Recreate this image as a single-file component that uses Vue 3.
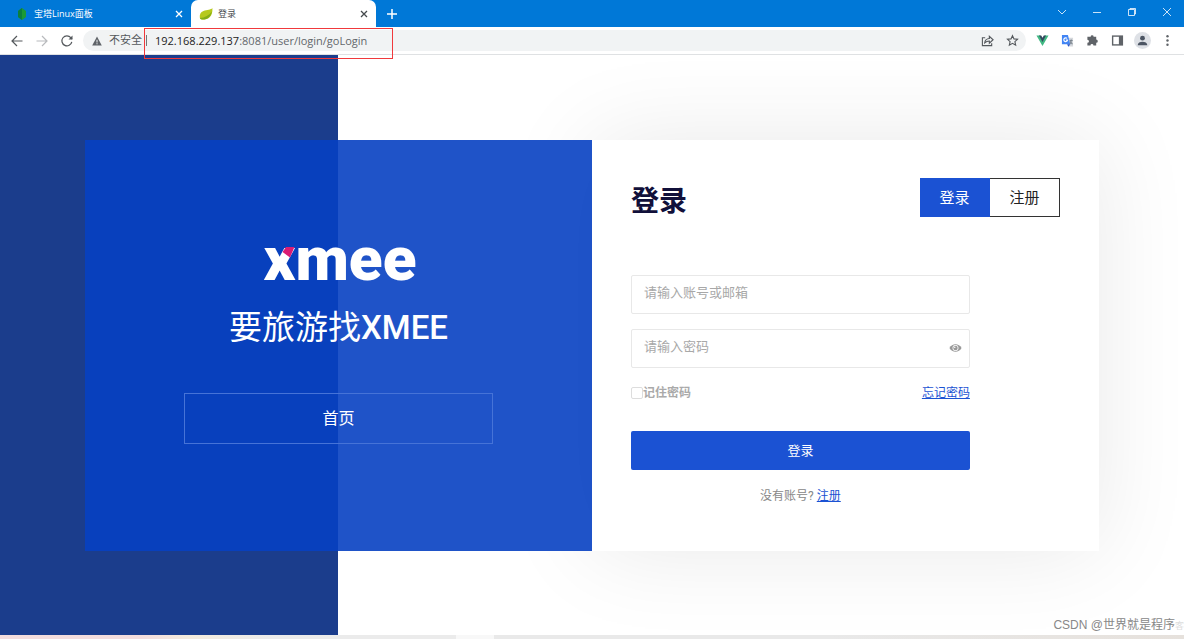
<script setup>
import { ref } from 'vue'

const account = ref('')
const password = ref('')
const remember = ref(false)
const visible = ref(false)
</script>

<template>
  <div class="browser">
    <header class="tabs">
      <div class="tab">
        <svg class="favicon" viewBox="0 0 14 14" aria-hidden="true">
          <path d="M3 4 7 1l4 3v6l-4 3-4-3z" fill="#1b9a35" />
          <path d="M7 1v12l-4-3V4z" fill="#0c7f3c" />
        </svg>
        <span class="tab-name">宝塔Linux面板</span>
        <button class="close" aria-label="关闭标签页">
          <svg viewBox="0 0 8 8"><path d="m1 1 6 6M7 1 1 7" /></svg>
        </button>
      </div>
      <div class="tab active">
        <svg class="favicon" viewBox="0 0 14 14" aria-hidden="true">
          <path d="M13.400 1C12 3 8 2.500 4.500 4 1.500 5.200.5 7.500.8 10.500c.2 1.500 1.500 2 3.500 2C9 12.600 14 10 13.400 1" fill="#b6c91c" />
          <path d="M1 11c5-.4 9-2.500 11.800-6.500C12 9.500 8.500 12.700 4 12.600c-1.800 0-3-.5-3-1.600" fill="#83ad16" />
        </svg>
        <span class="tab-name">登录</span>
        <button class="close" aria-label="关闭标签页">
          <svg viewBox="0 0 8 8"><path d="m1 1 6 6M7 1 1 7" /></svg>
        </button>
      </div>
      <button class="new-tab" aria-label="新标签页">
        <svg viewBox="0 0 10 10"><path d="M5 0v10M0 5h10" /></svg>
      </button>
      <div class="window-buttons">
        <button aria-label="搜索标签页"><svg viewBox="0 0 10 10"><path d="m1 3 4 4 4-4" /></svg></button>
        <button aria-label="最小化"><svg viewBox="0 0 10 10"><path d="M1 5.500h8" /></svg></button>
        <button aria-label="还原"><svg viewBox="0 0 10 10"><path d="M1.500 2.500h6v6h-6zM3 2.500v-1h5.500V7h-1" /></svg></button>
        <button aria-label="关闭"><svg viewBox="0 0 10 10"><path d="m1 1 8 8M9 1 1 9" /></svg></button>
      </div>
    </header>

    <nav class="toolbar">
      <button class="tool" aria-label="后退"><svg viewBox="0 0 14 14"><path d="M12.500 7H2M7 2 2 7l5 5" /></svg></button>
      <button class="tool faded" aria-label="前进"><svg viewBox="0 0 14 14"><path d="M1.500 7H12M7 2l5 5-5 5" /></svg></button>
      <button class="tool" aria-label="重新加载">
        <svg viewBox="0 0 14 14"><path d="M11.800 7.800A5 5 0 1 1 10.800 3.700L12 5" /><path d="M12.500 1.500v4h-4z" fill="currentColor" stroke="none" /></svg>
      </button>
      <div class="address">
        <svg class="warning" viewBox="0 0 10 10" aria-hidden="true">
          <path d="M5 .6 9.800 9.400H.2z" fill="#5f6368" /><path d="M5 3.800v2.700M5 7.200v1.100" stroke="#f1f3f4" />
        </svg>
        <span class="insecure">不安全</span>
        <span class="divider"></span>
        <span class="url"><b>192.168.229.137</b>:8081/user/login/goLogin</span>
        <span class="marker"></span>
        <button class="tool share" aria-label="分享">
          <svg viewBox="0 0 14 14"><path d="M4.500 4H1.500v8.500h10V10M4 9.500c.3-3 2-4.500 5-4.700V2.500l4 3.700-4 3.700V7.500C7 7.500 5.500 8 4 9.500z" /></svg>
        </button>
        <button class="tool" aria-label="收藏">
          <svg viewBox="0 0 14 14"><path d="m7 1.800 1.600 3.500 3.800.4-2.800 2.600.8 3.700L7 10.100 3.600 12l.8-3.700-2.800-2.600 3.800-.4z" /></svg>
        </button>
      </div>
      <div class="extensions">
        <button class="tool" aria-label="Vue">
          <svg viewBox="0 0 14 14" class="plain"><path d="M.5 1.500h4.200L7 5l2.300-3.500h4.200L7 13z" fill="#41b883" /><path d="M3.200 1.500h2.400L7 4l1.400-2.500h2.400L7 8.500z" fill="#34495e" /></svg>
        </button>
        <button class="tool" aria-label="翻译">
          <svg viewBox="0 0 14 14" class="plain">
            <path d="M6 4h7v9.500H8z" fill="#d5d8dc" /><path d="M1 1h6.500L10 11H1z" fill="#4285f4" /><path d="M6.500 11H10l-2 2.700z" fill="#2855c8" />
            <path d="M6.500 4.800A2 2 0 1 0 7 6.500H5.200" fill="none" stroke="#fff" /><path d="M9.300 7h3.200M11 6v1c0 1.800-.8 3-1.500 3.700M10 8l2.300 3" fill="none" stroke="#7b858f" />
          </svg>
        </button>
        <button class="tool" aria-label="扩展程序">
          <svg viewBox="0 0 14 14" class="plain"><path d="M5 3a1.600 1.600 0 0 1 3.200 0H11v3a1.700 1.700 0 0 1 0 3.400V12.500H8a1.600 1.600 0 0 0-3.200 0H1.500v-3a1.700 1.700 0 0 0 0-3.400V3z" /></svg>
        </button>
        <button class="tool" aria-label="侧边栏">
          <svg viewBox="0 0 14 14" class="plain"><path d="M1 1.500h12v11H1z" /><path d="M2.500 3H8.500v8h-6z" fill="#fff" /></svg>
        </button>
        <button class="tool avatar" aria-label="个人资料">
          <svg viewBox="0 0 14 14" class="plain"><circle cx="7" cy="4.500" r="2.600" fill="#4c5563" /><path d="M1.800 12c0-5 10.400-5 10.400 0z" fill="#4c5563" /></svg>
        </button>
        <button class="tool" aria-label="更多">
          <svg viewBox="0 0 14 14" class="plain"><circle cx="7" cy="2.500" r="1.300" /><circle cx="7" cy="7" r="1.300" /><circle cx="7" cy="11.500" r="1.300" /></svg>
        </button>
      </div>
    </nav>

    <main class="page">
      <div class="card">
        <section class="intro">
          <div class="logo">
            xmee
            <svg class="logo-tip" viewBox="0 0 13 11" aria-hidden="true"><path d="M4 0h8.500L8 10.500.5 5z" fill="#d91c74" /></svg>
          </div>
          <h2>要旅游找<span>XMEE</span></h2>
          <a class="home" href="#">首页</a>
        </section>

        <section class="login">
          <div class="heading">
            <h1>登录</h1>
            <div class="switch">
              <a class="current" href="#">登录</a>
              <a href="#">注册</a>
            </div>
          </div>
          <form @submit.prevent>
            <input v-model="account" class="field" type="text" placeholder="请输入账号或邮箱" aria-label="账号或邮箱" />
            <div class="password">
              <input v-model="password" class="field" :type="visible ? 'text' : 'password'" placeholder="请输入密码" aria-label="密码" />
              <button class="eye" type="button" aria-label="显示密码" @click="visible = !visible">
                <svg viewBox="0 0 14 10">
                  <path d="M.5 5C3.300-.4 10.700-.4 13.500 5 10.700 10.400 3.300 10.400.5 5z" fill="#999" />
                  <circle cx="7" cy="5" r="3.200" fill="#fff" /><circle cx="7" cy="5" r="2.400" fill="#999" /><circle cx="6.200" cy="4.200" r=".8" fill="#fff" />
                </svg>
              </button>
            </div>
            <div class="options">
              <label><input v-model="remember" type="checkbox" />记住密码</label>
              <a href="#">忘记密码</a>
            </div>
            <button class="submit" type="submit">登录</button>
            <p class="register">没有账号? <a href="#">注册</a></p>
          </form>
        </section>
      </div>
      <div class="watermark">CSDN @世界就是程序<span class="echo">客</span></div>
    </main>
    <footer class="taskbar"></footer>
  </div>
</template>

<style>
body {
  margin: 0;
}
</style>

<style scoped>
.browser {
  display: flex;
  flex-direction: column;
  min-height: 100vh;
  font-family: Roboto, "Noto Sans CJK SC", sans-serif;
  font-size: 13px;
  color: #222;
}
.browser *,
.browser *::before {
  box-sizing: border-box;
}
button {
  padding: 0;
  border: 0;
  background: none;
  font: inherit;
  color: inherit;
}
svg {
  display: block;
  fill: none;
  stroke: currentColor;
}
.plain,
.favicon,
.warning,
.logo-tip,
.eye svg {
  stroke: none;
}
.plain {
  fill: #5f6368;
}

/* Tab strip */
.tabs {
  display: flex;
  height: 27px;
  background: #0078d7;
  color: #fff;
}
.tab {
  display: flex;
  align-items: center;
  width: 191px;
  padding: 0 8px 0 15px;
  font: 9px/16px "Open Sans", "Noto Sans CJK SC", sans-serif;
}
.tab.active {
  width: 185px;
  padding-left: 8px;
  border-radius: 7px 7px 0 0;
  background: #fff;
  color: #45494d;
}
.favicon {
  width: 14px;
  height: 14px;
  margin-right: 5px;
}
.tab-name {
  flex: 1;
}
.close svg {
  width: 8px;
  height: 8px;
  stroke-width: 1.3;
}
.new-tab {
  width: 32px;
}
.new-tab svg {
  width: 10px;
  height: 10px;
  margin: 0 auto;
  stroke-width: 1.5;
}
.window-buttons {
  display: flex;
  margin-left: auto;
}
.window-buttons button {
  width: 35px;
  padding-bottom: 3px;
}
.window-buttons svg {
  width: 10px;
  height: 10px;
  margin: 0 auto;
  stroke-width: 0.8;
}

/* Toolbar */
.toolbar {
  display: flex;
  align-items: center;
  height: 28px;
  padding: 0 8px;
  border-bottom: 1px solid #dfe1e3;
  background: #fff;
  color: #54585c;
}
.tool {
  display: grid;
  place-items: center;
  width: 17px;
  height: 17px;
  margin-right: 8px;
}
.tool svg {
  width: 14px;
  height: 14px;
  stroke-width: 1.2;
}
.faded {
  color: #b8babd;
}
.address {
  position: relative;
  z-index: 1;
  display: flex;
  flex: 1;
  align-items: center;
  height: 21px;
  padding-left: 9px;
  border-radius: 11px;
  background: #f1f3f4;
}
.warning {
  width: 10px;
  height: 10px;
  margin-right: 7px;
}
.insecure {
  font-size: 11px;
  line-height: 16px;
}
.divider {
  width: 1px;
  height: 11px;
  margin: 0 8px 0 4px;
  background: #777;
}
.url {
  font: 11px/16px "Open Sans", sans-serif;
  color: #63676b;
}
.url b {
  font-weight: 400;
  color: #222;
}
.marker {
  position: absolute;
  top: -2px;
  left: 61px;
  width: 249px;
  height: 31px;
  border: 1px solid #f0393c;
}
.share {
  margin-left: auto;
}
.address .tool:last-child {
  margin-right: 5px;
}
.address .tool svg {
  width: 13px;
  height: 13px;
}
.extensions {
  display: flex;
  gap: 8px;
  margin-left: 8px;
}
.extensions .tool {
  margin: 0;
}
.extensions .tool svg {
  width: 13px;
  height: 13px;
}
.avatar {
  border-radius: 50%;
  background: #dee1e6;
}

/* Login page */
.page {
  position: relative;
  flex: 1;
  padding: 85px 85px 84px;
  overflow: hidden;
  background: linear-gradient(90deg, #1b3d8c 0 28.57%, #fff 0);
}
.card {
  display: grid;
  grid-template-columns: 1fr 1fr;
  min-height: 411px;
}
.intro {
  position: relative;
  z-index: 1;
  padding: 87px 99px 0;
  background: rgba(7, 64, 194, 0.9);
  color: #fff;
  text-align: center;
}
.logo {
  position: relative;
  width: 150px;
  margin: 0 auto;
  font: 900 62px/64px Roboto, sans-serif;
}
.logo-tip {
  position: absolute;
  top: 20px;
  left: 18px;
  width: 13px;
  height: 11px;
}
h2 {
  margin: 13px 0 42px;
  font-size: 33px;
  font-weight: 400;
  line-height: 47px;
}
h2 span {
  font-weight: 500;
}
.home {
  display: block;
  border: 1px solid #4673d7;
  font-size: 16px;
  line-height: 49px;
  color: #fff;
  text-decoration: none;
}
.login {
  padding: 38px 39px 0;
  background: #fff;
  box-shadow: 0 0 90px rgba(0, 0, 0, 0.09);
}
.heading {
  display: flex;
  justify-content: space-between;
}
h1 {
  margin: 0;
  font-size: 28px;
  font-weight: 700;
  line-height: 47px;
  color: #11103a;
}
.switch {
  display: flex;
  height: 39px;
}
.switch a {
  width: 70px;
  border: 1px solid #333;
  border-left: 0;
  font-size: 15px;
  line-height: 38px;
  color: #222;
  text-align: center;
  text-decoration: none;
}
.switch .current {
  border-color: #1b52d3;
  background: #1b52d3;
  color: #fff;
}
form {
  width: 79%;
  margin-top: 50px;
}
.field {
  display: block;
  width: 100%;
  height: 39px;
  padding: 0 12px 4px;
  border: 1px solid #e8e8e8;
  border-radius: 2px;
  background: #fff;
  outline: 0;
  font: 13px/20px Roboto, "Noto Sans CJK SC", sans-serif;
}
.field::placeholder {
  color: #a8a8a8;
}
.password {
  position: relative;
  margin-top: 15px;
}
.eye {
  position: absolute;
  top: 14px;
  right: 8px;
}
.eye svg {
  width: 13px;
  height: 10px;
}
.options {
  display: flex;
  justify-content: space-between;
  margin-top: 15px;
  font-size: 12px;
  line-height: 20px;
}
.options label {
  display: flex;
  align-items: center;
  font-weight: 700;
  color: #aaa;
}
.options input {
  width: 12px;
  height: 12px;
  margin: 0;
  border: 1px solid #ddd;
  border-radius: 2px;
  appearance: none;
}
.options input:checked {
  background: #1b52d3;
}
form a {
  color: #1b52d3;
}
.submit {
  display: block;
  width: 100%;
  height: 39px;
  margin-top: 28px;
  padding-bottom: 2px;
  border-radius: 2px;
  background: #1b52d3;
  color: #fff;
}
.register {
  margin: 16px 0 0;
  font-size: 12px;
  line-height: 20px;
  color: #888;
  text-align: center;
}
.watermark {
  position: absolute;
  right: 0;
  bottom: 0;
  font: 12px/18px "Liberation Sans", "Noto Sans CJK SC", sans-serif;
  color: #888;
}
.echo {
  font-size: 9px;
  color: #ddd;
}
.taskbar {
  height: 4px;
  background: linear-gradient(90deg, #f3dddd 0 12%, #f3ebdd 16%, #ebebeb 23% 38.500%, #f8f8f8 38.500% 41.700%, #e9e9e9 41.700% 70%, #e6e1dc);
}
</style>
